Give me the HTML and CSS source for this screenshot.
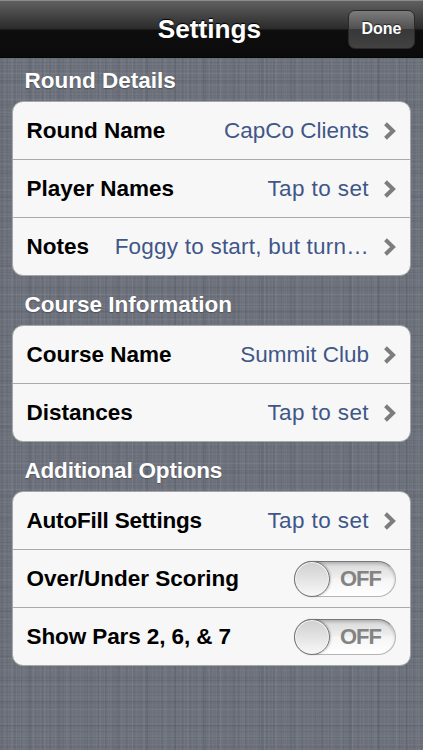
FILE: index.html
```
<!DOCTYPE html>
<html lang="en">
<head>
  <meta charset="UTF-8" />
  <meta name="viewport" content="width=device-width, initial-scale=1.0"/>
  <title>Settings</title>
  <link rel="stylesheet" href="styles.css">
</head>
<body>
  <header class="navbar">
    <h1>Settings</h1>
    <button type="button" class="done">Done</button>
  </header>

  <main>
    <h2>Round Details</h2>
    <div class="group">
      <div class="row">
        <span class="label">Round Name</span>
        <span class="value">CapCo Clients</span>
        <svg class="chevron" viewBox="0 0 12 18"><path d="M1.5 1.800 9 9l-7.500 7.200" /></svg>
      </div>
      <div class="row">
        <span class="label">Player Names</span>
        <span class="value unset">Tap to set</span>
        <svg class="chevron" viewBox="0 0 12 18"><path d="M1.5 1.800 9 9l-7.500 7.200" /></svg>
      </div>
      <div class="row">
        <span class="label">Notes</span>
        <span class="value notes">Foggy to start, but turn…</span>
        <svg class="chevron" viewBox="0 0 12 18"><path d="M1.5 1.800 9 9l-7.500 7.200" /></svg>
      </div>
    </div>

    <h2>Course Information</h2>
    <div class="group">
      <div class="row">
        <span class="label">Course Name</span>
        <span class="value">Summit Club</span>
        <svg class="chevron" viewBox="0 0 12 18"><path d="M1.5 1.800 9 9l-7.500 7.200" /></svg>
      </div>
      <div class="row">
        <span class="label">Distances</span>
        <span class="value unset">Tap to set</span>
        <svg class="chevron" viewBox="0 0 12 18"><path d="M1.5 1.800 9 9l-7.500 7.200" /></svg>
      </div>
    </div>

    <h2 class="tight">Additional Options</h2>
    <div class="group">
      <div class="row">
        <span class="label tight">AutoFill Settings</span>
        <span class="value unset">Tap to set</span>
        <svg class="chevron" viewBox="0 0 12 18"><path d="M1.5 1.800 9 9l-7.500 7.200" /></svg>
      </div>
      <div class="row">
        <span class="label">Over/Under Scoring</span>
        <div class="switch"><span class="knob"></span><span class="off">OFF</span></div>
      </div>
      <div class="row">
        <span class="label pars">Show Pars 2, 6, &amp; 7</span>
        <div class="switch"><span class="knob"></span><span class="off">OFF</span></div>
      </div>
    </div>
  </main>
</body>
</html>
```
FILE: styles.css
```
* {
  box-sizing: border-box;
}
body {
  margin: 0;
  height: 750px;
  overflow: hidden;
  font-family: "Liberation Sans", Arial, sans-serif;
  /* linen: threads with different spacing in both directions */
  background-color: #6d717b;
  background-image:
    repeating-linear-gradient(90deg, rgba(255,255,255,0.03) 0 1px, transparent 1px 4px),
    repeating-linear-gradient(90deg, rgba(30,35,50,0.07) 0 1px, transparent 2px 7px),
    repeating-linear-gradient(90deg, rgba(30,35,50,0.07) 0 2px, transparent 4px 29px),
    repeating-linear-gradient(90deg, rgba(255,255,255,0.04) 0 1px, transparent 2px 11px),
    repeating-linear-gradient(0deg, rgba(255,255,255,0.03) 0 1px, transparent 2px 5px),
    repeating-linear-gradient(0deg, rgba(30,35,50,0.05) 0 1px, transparent 1px 3px),
    repeating-linear-gradient(0deg, rgba(255,255,255,0.04) 0 1px, transparent 2px 13px),
    repeating-linear-gradient(0deg, rgba(30,35,50,0.06) 0 2px, transparent 4px 23px);
}
.navbar {
  display: grid;
  grid-template-columns: 74px 1fr 70px;
  align-items: center;
  height: 58px;
  padding-right: 8px;
  background: linear-gradient(#606060 0, #2a2a2a 28px, #0e0e0e 29px, #0b0b0b 57px);
  border-top: 1px solid #8b8b8b;
  border-bottom: 1px solid #050505;
}
h1 {
  grid-column: 2;
  margin: 0;
  color: #fff;
  font-size: 26.2px;
  line-height: 30px;
  text-align: center;
  text-shadow: 0 -1px 1px #000;
}
.done {
  width: 67px;
  height: 39px;
  justify-self: end;
  padding: 0;
  color: #fff;
  font: bold 16px/20px "Liberation Sans", Arial, sans-serif;
  text-shadow: 0 -1px 1px #222;
  background: linear-gradient(#7c7c7c, #4f4f4f 49%, #383838 50%, #424242);
  border: 1px solid #292929;
  border-radius: 7px;
}
main {
  padding: 0 12px;
}
h2 {
  margin: 0;
  height: 43px;
  padding: 9px 0 0 12.5px;
  color: #fff;
  font-size: 22.5px;
  line-height: 27px;
  text-shadow: 0 1px 1px rgba(60,64,72,0.6);
}
.group + h2 {
  height: 49px;
  padding-top: 15px;
}
.group {
  background: #f7f7f7;
  border: 1px solid #a5a6aa;
  border-radius: 11px;
}
.row {
  display: flex;
  align-items: center;
  height: 57px;
  padding: 0 14px 0 13.5px;
}
.row + .row {
  height: 58px;
  border-top: 1px solid #a9a9ab;
}
.label {
  color: #000;
  font-size: 22.5px;
  font-weight: bold;
  white-space: nowrap;
}
.tight {
  letter-spacing: -0.2px;
}
.pars {
  letter-spacing: -0.1px;
}
.value {
  margin-left: auto;
  color: #3f5788;
  font-size: 22.5px;
  white-space: nowrap;
}
.unset {
  letter-spacing: 0.4px;
}
.notes {
  letter-spacing: 0.22px;
}
.chevron {
  width: 12px;
  height: 18px;
  margin-left: 15px;
  fill: none;
  stroke: #7d7d7d;
  stroke-width: 4;
}
.switch {
  display: flex;
  align-items: center;
  width: 102px;
  height: 36px;
  margin-left: auto;
  border: 1px solid #b4b4b4;
  border-top-color: #777;
  border-radius: 18px;
  background: linear-gradient(#d8d8d8, #eee 45%, #f5f5f5 50%, #fff);
  box-shadow: inset 0 2px 3px rgba(0,0,0,0.18);
}
.knob {
  width: 36px;
  height: 36px;
  margin-left: -1px;
  border: 1px solid #747474;
  border-radius: 50%;
  background: linear-gradient(#cfcfcf, #f8f8f8);
  box-shadow: inset 0 0 0 1px #f4f4f4, 1px 0 2px rgba(0,0,0,0.2);
}
.off {
  margin-left: 10px;
  color: #838383;
  font-size: 22px;
  font-weight: bold;
  letter-spacing: -1px;
}
```
